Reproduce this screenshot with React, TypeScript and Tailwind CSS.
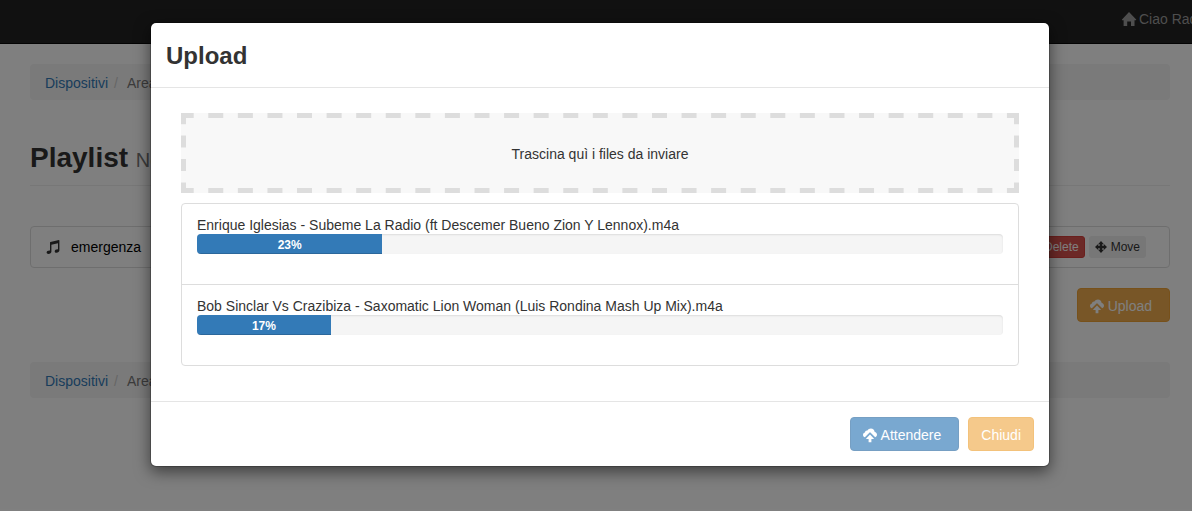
import type { ReactNode } from 'react';

const uploads = [
  { name: 'Enrique Iglesias - Subeme La Radio (ft Descemer Bueno Zion Y Lennox).m4a', progress: 23, width: 'w-[23%]' },
  { name: 'Bob Sinclar Vs Crazibiza - Saxomatic Lion Woman (Luis Rondina Mash Up Mix).m4a', progress: 17, width: 'w-[16.6%]' },
];

function Icon({ size = 14, children }: { size?: number; children: ReactNode }) {
  return (
    <svg width={size} height={size} viewBox="0 0 14 14" fill="currentColor" className="shrink-0 overflow-visible" aria-hidden="true">
      {children}
    </svg>
  );
}

function HomeIcon() {
  return (
    <Icon>
      <path d="M7 0 14.2 7.6Q14.4 8.2 13.8 8.2H12.5V14H9V9.6H5.2V14H1.6V8.2H.3Q-.3 8.2 0 7.6Z" />
    </Icon>
  );
}

function MusicIcon() {
  return (
    <Icon>
      <path d="M4.4 2 12.9 0Q13.4 0 13.4.5V10.6C13.4 11.8 12 12.8 10.6 12.8 9.4 12.8 8.7 12.2 8.7 11.4 8.7 10.2 10.1 9.2 12 9.4V3.2L5.4 4.7V11.8C5.4 13 4 14 2.5 14 1.3 14 .6 13.4 .6 12.6 .6 11.4 2 10.4 4 10.6V2.5Q4 2.1 4.4 2Z" />
    </Icon>
  );
}

function MoveIcon() {
  return (
    <Icon size={12}>
      <path d="M7 0 10.4 3.7H8.4V5.6H10.3V3.6L14 7 10.3 10.4V8.4H8.4V10.3H10.4L7 14 3.6 10.3H5.6V8.4H3.7V10.4L0 7 3.7 3.6V5.6H5.6V3.7H3.6Z" />
    </Icon>
  );
}

function CloudUploadIcon() {
  return (
    <Icon>
      <path d="M1.9 9.3C.8 9 0 8.2 0 7 0 5.7.9 4.8 2 4.6 2 3.2 3.2 2.3 4.4 2.6 5.1 1.2 6.4.4 7.9.4 10 .4 11.6 2 11.7 4.1 13.1 4.4 14 5.5 14 6.8 14 8 13.3 8.9 12.2 9.3L7.4 4.5Q7 4.2 6.6 4.5Z" />
      <path d="M7 6.4 10.8 10.4Q11 10.9 10.4 10.9H8.4V14.2H5.6V10.9H3.6Q3 10.9 3.2 10.4Z" />
    </Icon>
  );
}

function Breadcrumb() {
  return (
    <nav className="flex rounded bg-[#f5f5f5] px-[15px] pt-[9px] pb-[7px]">
      <a href="#dispositivi" className="text-[#337ab7]">Dispositivi</a>
      <span className="px-[6px] text-[#ccc]">/</span>
      <span className="pl-[3px] text-[#777]">Area</span>
    </nav>
  );
}

function DropZone() {
  return (
    <div className="relative flex h-20 items-center justify-center bg-[#f8f8f8] pt-[2px]">
      <svg className="absolute inset-0 size-full" stroke="#ddd" strokeWidth="5" aria-hidden="true">
        <line x1="0" y1="2.5" x2="100%" y2="2.5" strokeDasharray="15 14.58" strokeDashoffset="2.3" />
        <line x1="0" y1="77.5" x2="100%" y2="77.5" strokeDasharray="15 14.58" strokeDashoffset="2.3" />
        <line x1="2.5" y1="0" x2="2.5" y2="100%" strokeDasharray="12 11.4" strokeDashoffset="0.8" />
        <svg x="100%" overflow="visible">
          <line x1="-2.5" y1="0" x2="-2.5" y2="100%" strokeDasharray="12 11.4" strokeDashoffset="0.8" />
        </svg>
      </svg>
      <span>Trascina quì i files da inviare</span>
    </div>
  );
}

function UploadModal() {
  return (
    <div
      role="dialog"
      aria-labelledby="upload-title"
      className="w-full max-w-[900px] rounded-md border border-black/20 bg-white bg-clip-padding shadow-[0_5px_15px_rgba(0,0,0,0.5)]"
    >
      <div className="border-b border-[#e5e5e5] px-[15px] pt-4 pb-[14px]">
        <h3 id="upload-title" className="text-2xl leading-[34px] font-bold">Upload</h3>
      </div>
      <div className="px-[30px] pt-[25px] pb-[35px]">
        <DropZone />
        <ul className="mt-[10px] divide-y divide-[#ddd] rounded border border-[#ddd]">
          {uploads.map((file) => (
            <li key={file.name} className="px-[15px] pt-3 pb-[30px]">
              <div className="leading-[18px]">{file.name}</div>
              <div
                role="progressbar"
                aria-label={file.name}
                aria-valuenow={file.progress}
                className="relative h-5 overflow-hidden rounded bg-[#f5f5f5] shadow-[inset_0_1px_2px_rgba(0,0,0,0.1)]"
              >
                <div
                  className={`h-full bg-[#337ab7] text-center text-xs leading-[22px] font-bold text-white shadow-[inset_0_-1px_0_rgba(0,0,0,0.15)] ${file.width}`}
                >
                  {file.progress}%
                </div>
              </div>
            </li>
          ))}
        </ul>
      </div>
      <div className="flex justify-end gap-[9px] border-t border-[#e5e5e5] p-[15px]">
        <button disabled className="flex items-center gap-1 rounded border border-[#2e6da4] bg-[#337ab7] px-3 pt-[7px] pb-[5px] text-white opacity-65">
          <CloudUploadIcon />
          <span className="pr-[5px]">Attendere</span>
        </button>
        <button disabled className="rounded border border-[#eea236] bg-[#f0ad4e] px-3 pt-[7px] pb-[5px] text-white opacity-65">
          Chiudi
        </button>
      </div>
    </div>
  );
}

export default function App() {
  return (
    <div className="relative min-h-screen overflow-hidden bg-white font-['Liberation_Sans',Arial,sans-serif] text-sm leading-5 text-[#333]">
      <header className="flex h-11 justify-end overflow-hidden border-b border-[#080808] bg-[#222] pb-[6px]">
        <a href="#profilo" className="flex w-[70px] items-center gap-[3px] whitespace-nowrap text-[#9d9d9d]">
          <HomeIcon />
          Ciao Rad
        </a>
      </header>

      <main className="flex flex-col pt-5 pr-[22px] pl-[30px]">
        <Breadcrumb />
        <h2 className="mt-10 mb-10 border-b border-[#eee] pb-[9px] text-[28px] leading-9 font-bold">
          Playlist <small className="text-xl leading-none font-normal text-[#777]">News</small>
        </h2>
        <div className="flex items-center rounded border border-[#ddd] px-[15px] py-[9px]">
          <MusicIcon />
          <span className="pl-[11px] text-black">emergenza</span>
          <div className="mr-2 ml-auto flex gap-1 text-xs leading-5">
            <button className="rounded-[3px] border border-[#d43f3a] bg-[#d9534f] px-[5px] text-white">Delete</button>
            <button className="flex items-center gap-1 rounded-[3px] bg-[#eee] px-[6px]">
              <MoveIcon />
              Move
            </button>
          </div>
        </div>
        <button className="mt-5 mb-10 flex items-center gap-1 self-end rounded border border-[#eea236] bg-[#f0ad4e] px-3 pt-[7px] pb-[5px] text-white">
          <CloudUploadIcon />
          <span className="pr-[5px]">Upload</span>
        </button>
        <Breadcrumb />
      </main>

      <div className="absolute inset-0 flex items-start justify-center bg-black/50 pt-[22px] pl-2">
        <UploadModal />
      </div>
    </div>
  );
}
